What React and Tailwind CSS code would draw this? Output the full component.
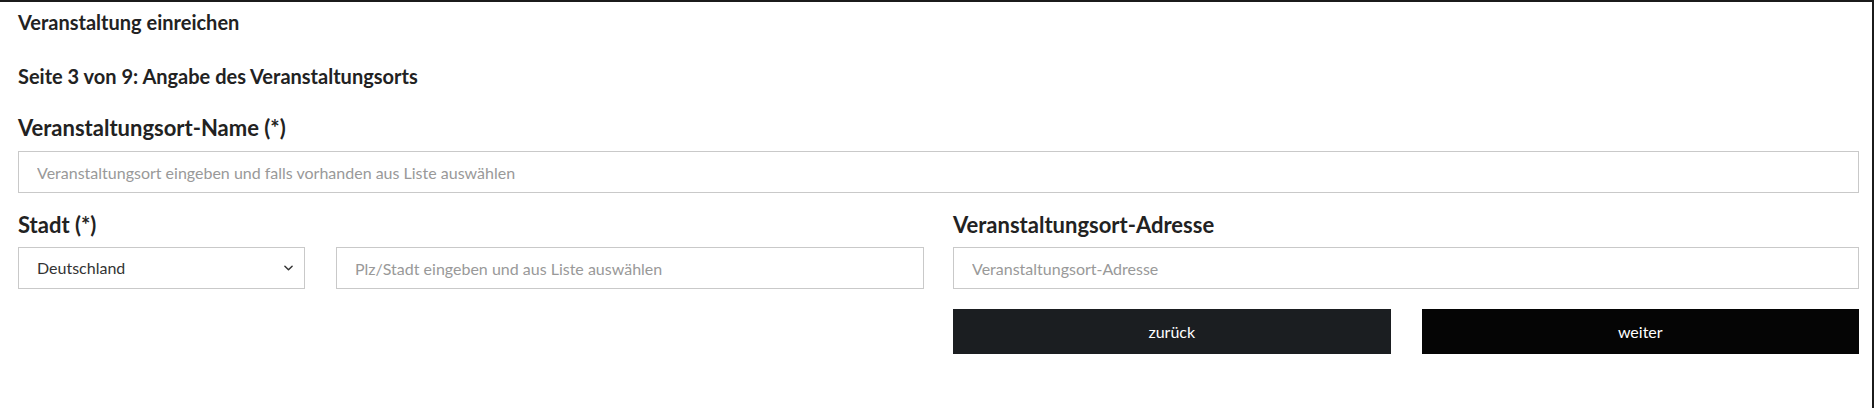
import { useState } from 'react';

function Chevron() {
  return (
    <svg viewBox="0 0 10 6" className="pointer-events-none absolute right-[12px] top-1/2 -translate-y-1/2 w-[9px] h-[6px]">
      <path d="M1 1l4 4 4-4" fill="none" stroke="#333" strokeWidth="1.6" strokeLinecap="round" strokeLinejoin="round" />
    </svg>
  );
}

const inputCls =
  'w-full h-[42px] border border-[#c9c9c9] bg-white px-[18px] text-[16px] text-[#333] placeholder:text-[#999] outline-none';

export default function App() {
  const [country, setCountry] = useState('DE');

  return (
    <div className="w-full h-[408px] bg-white border-t-2 border-r-2 border-[#1b1b1b] font-['Lato',sans-serif] text-[#222]">
      <div className="pl-[18px] pr-[13px] pt-[8px]">
        <h1 className="text-[20px] leading-[24px] font-bold">Veranstaltung einreichen</h1>
        <h2 className="mt-[30px] text-[20px] leading-[24px] font-bold">Seite 3 von 9: Angabe des Veranstaltungsorts</h2>

        <label className="block mt-[27px] text-[22px] leading-[26px] font-bold">Veranstaltungsort-Name (*)</label>
        <input
          className={`${inputCls} mt-[10px]`}
          placeholder="Veranstaltungsort eingeben und falls vorhanden aus Liste auswählen"
        />

        <div className="grid grid-cols-2 gap-x-[29px] mt-[19px]">
          <div>
            <label className="block text-[22px] leading-[26px] font-bold">Stadt (*)</label>
            <div className="flex gap-[31px] mt-[9px]">
              <div className="relative w-[287px] shrink-0">
                <select
                  value={country}
                  onChange={(e) => setCountry(e.target.value)}
                  className="w-full h-[42px] appearance-none border border-[#c9c9c9] bg-white pl-[18px] pr-8 text-[16px] text-[#333] outline-none"
                >
                  <option value="DE">Deutschland</option>
                  <option value="AT">Österreich</option>
                  <option value="CH">Schweiz</option>
                </select>
                <Chevron />
              </div>
              <input className={inputCls} placeholder="Plz/Stadt eingeben und aus Liste auswählen" />
            </div>
          </div>

          <div>
            <label className="block text-[22px] leading-[26px] font-bold">Veranstaltungsort-Adresse</label>
            <input className={`${inputCls} mt-[9px]`} placeholder="Veranstaltungsort-Adresse" />
            <div className="flex gap-[31px] mt-[20px]">
              <button className="flex-1 h-[45px] bg-[#1b1e21] text-white text-[16px]">zurück</button>
              <button className="flex-1 h-[45px] bg-[#050505] text-white text-[16px]">weiter</button>
            </div>
          </div>
        </div>
      </div>
    </div>
  );
}
